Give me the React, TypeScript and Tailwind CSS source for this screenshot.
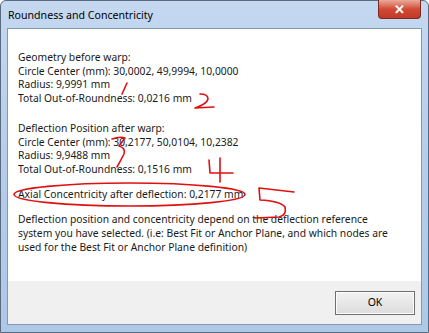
import React from 'react';

const lines1 = [
  'Geometry before warp:',
  'Circle Center (mm): 30,0002, 49,9994, 10,0000',
  'Radius: 9,9991 mm',
  'Total Out-of-Roundness: 0,0216 mm',
];

const lines2 = [
  'Deflection Position after warp:',
  'Circle Center (mm): 30,2177, 50,0104, 10,2382',
  'Radius: 9,9488 mm',
  'Total Out-of-Roundness: 0,1516 mm',
];

function Annotations() {
  return (
    <svg className="absolute left-0 top-0 pointer-events-none" width={429} height={333} fill="none" stroke="#e01010" strokeWidth={1.6} strokeLinecap="round" strokeLinejoin="round">
      {/* 1 */}
      <path d="M127 83 L122 94" />
      {/* 2 */}
      <path d="M200 94 Q208 94 208 99 Q207 104 195 108 L214 107" />
      {/* 3 */}
      <path d="M112 139 Q120 136 125 138 L119 146 Q126 148 124 154 Q121 160 117 167" />
      {/* 4 */}
      <path d="M209 160 L210 173 L233 173 M220 158 L220 182" />
      {/* 5 */}
      <path d="M259 188 L294 192 M259 188 L260 200 Q280 201 285 207 Q287 215 279 217 L255 218" />
      <ellipse cx={129.5} cy={194.5} rx={115.5} ry={11.5} />
    </svg>
  );
}

export default function App() {
  return (
    <div className="relative w-[429px] h-[333px] overflow-hidden bg-white font-['Noto_Sans',sans-serif]">
      <div className="flex h-full w-full flex-col rounded-t-[6px] border border-[#5a6b80] bg-gradient-to-b from-[#c4d8f0] via-[#b5cdea] to-[#aec8e8]">
        {/* title bar */}
        <div className="flex h-[27px] shrink-0 items-start justify-between pl-[7px] pr-[7px]">
          <span className="pt-[6px] text-[10.6px] leading-[16px] text-black">Roundness and Concentricity</span>
          <div className="flex h-[19px] w-[43px] items-center justify-center rounded-b-[4px] border border-t-0 border-[#7a2a22] bg-gradient-to-b from-[#e9a99c] via-[#d24a35] to-[#c13a28] -mt-px">
            <span className="text-[13px] font-bold leading-none text-white">✕</span>
          </div>
        </div>
        {/* client */}
        <div className="mx-[6px] mb-[7px] flex flex-1 flex-col border border-[#8598b0] bg-white">
          <div className="flex-1 px-[10px] pt-[22px] text-[10.3px] leading-[13.7px] text-[#1a1a1a]">
            {lines1.map((l) => (
              <div key={l}>{l}</div>
            ))}
            <div className="h-[16px]" />
            {lines2.map((l) => (
              <div key={l}>{l}</div>
            ))}
            <div className="h-[11px]" />
            <div>Axial Concentricity after deflection: 0,2177 mm</div>
            <div className="h-[12px]" />
            <div className="w-[372px]">
              Deflection position and concentricity depend on the deflection reference system you have selected. (i.e: Best Fit or Anchor Plane, and which nodes are used for the Best Fit or Anchor Plane definition)
            </div>
          </div>
          <div className="flex h-[43px] shrink-0 items-center justify-end bg-[#f0f0f0] pr-[6px]">
            <button className="h-[24px] w-[80px] border border-[#707070] bg-gradient-to-b from-[#f2f2f2] to-[#dcdcdc] text-[10.5px] text-black shadow-[inset_0_0_0_1px_#fcfcfc]">
              OK
            </button>
          </div>
        </div>
      </div>
      <Annotations />
    </div>
  );
}
